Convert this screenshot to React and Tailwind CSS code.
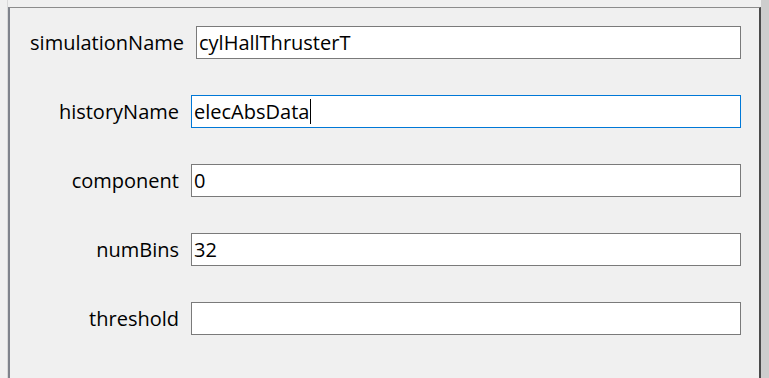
import React from "react";

const rows = [
  { label: "simulationName", value: "cylHallThrusterT", labelW: "w-[174px]" },
  { label: "historyName", value: "elecAbsData", labelW: "w-[169px]", focused: true },
  { label: "component", value: "0", labelW: "w-[169px]" },
  { label: "numBins", value: "32", labelW: "w-[169px]" },
  { label: "threshold", value: "", labelW: "w-[169px]" },
];

const Field = ({ value, focused }) => (
  <div
    className={`flex-1 h-[33px] bg-white flex items-center pl-[2px] text-[20px] border ${
      focused ? "border-[#0078d7]" : "border-[#7a7a7a]"
    }`}
  >
    <span>{value}</span>
    {focused && <span className="w-px h-[25px] bg-black ml-[1px]" />}
  </div>
);

export default function App() {
  return (
    <div
      className="w-[769px] h-[378px] bg-[#f0f0f0] flex text-black overflow-hidden"
      style={{ fontFamily: '"Open Sans", "Noto Sans", sans-serif' }}
    >
      <div className="w-[8px] h-full border-r border-[#d9d9d9]" />
      <div className="flex-1 mt-[7px] border-t border-l-2 border-t-[#8c8c8c] border-l-[#7f838c] border-r-2 border-r-[#4a4a4a]">
        <div className="flex flex-col gap-[36px] pt-[18px] pr-[18px] text-[20px]">
          {rows.map((r) => (
            <div key={r.label} className="flex items-center">
              <div className={`${r.labelW} text-right shrink-0`}>{r.label}</div>
              <div className="w-[12px] shrink-0" />
              <Field value={r.value} focused={r.focused} />
            </div>
          ))}
        </div>
      </div>
      <div className="w-[8px] h-full bg-[#cdcdcd]" />
    </div>
  );
}
